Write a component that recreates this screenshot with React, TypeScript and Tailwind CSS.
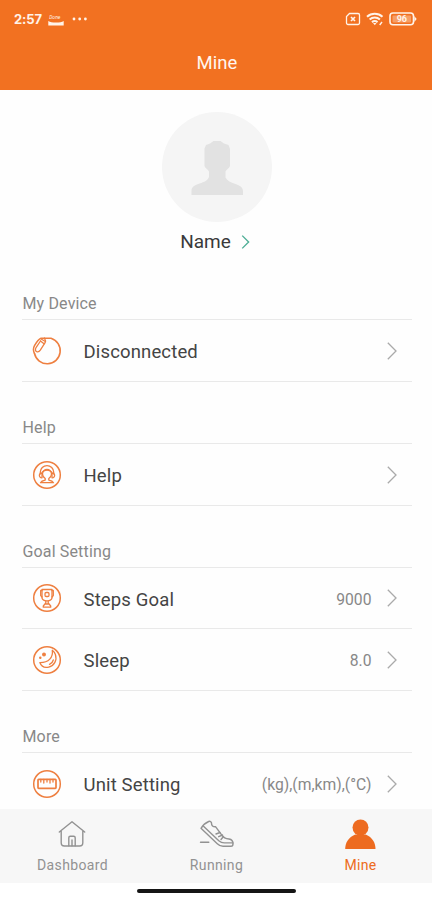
import type { ReactNode } from "react";

function StatusBar() {
  return (
    <div className="flex h-[38px] items-center justify-between pl-[14px] pr-[15px] text-[#fff3e9]">
      <div className="flex items-center">
        <span className="w-[28px] whitespace-nowrap font-['Inter'] text-[13px] font-bold leading-none tracking-[-0.1px]">
          2:57
        </span>
        <svg width="16" height="13" viewBox="0 0 16 13" className="ml-[6px] mt-[2px]" fill="currentColor">
          <text x="1.2" y="4.5" fontSize="5" fontStyle="italic">Done</text>
          <path d="M.3 7c2 1.100 4 1.500 7.700 1.500s5.700-.4 7.700-1.500v4.500H.3z" />
        </svg>
        <svg width="16" height="4" viewBox="0 0 16 4" className="ml-2" fill="currentColor">
          <circle cx="2" cy="2" r="1.4" />
          <circle cx="7.700" cy="2" r="1.400" />
          <circle cx="13.400" cy="2" r="1.400" />
        </svg>
      </div>
      <div className="flex items-center">
        <svg width="16" height="14" viewBox="0 0 16 14" fill="none" stroke="currentColor" strokeWidth="1.300">
          <path d="M4.500 1.500H13A1.500 1.500 0 0 1 14.500 3v8a1.500 1.500 0 0 1-1.500 1.500H3A1.500 1.500 0 0 1 1.500 11V4.500z" />
          <path d="m6 5 4 4m0-4L6 9" strokeWidth="1.700" />
        </svg>
        <svg width="18" height="14" viewBox="0 0 18 14" className="ml-[5px]" fill="none" stroke="currentColor" strokeWidth="2">
          <path d="M1 4.700a11.500 11.500 0 0 1 15.500 0" />
          <path d="M3.600 7.500a7.500 7.500 0 0 1 10.300 0" />
          <path d="M6 10.200a4 4 0 0 1 5.500 0" />
          <path d="m7 11 1.800 2.200 1.700-2.200z" fill="currentColor" stroke="none" />
          <path d="m16 10-2.300 3" strokeWidth="1.400" />
        </svg>
        <svg width="28" height="14" viewBox="0 0 28 14" className="ml-[5px]" fill="none" stroke="currentColor" strokeWidth="1.600">
          <rect x="1" y="1" width="23.500" height="11.800" rx="3" />
          <path d="M25.300 4 27.700 7l-2.400 3z" fill="currentColor" stroke="none" />
          <rect x="3.500" y="3.500" width="18.500" height="7" rx="1" fill="currentColor" stroke="none" opacity=".35" />
          <text x="12.800" y="10.200" textAnchor="middle" fontSize="9" fontWeight="700" fill="currentColor" stroke="none">96</text>
        </svg>
      </div>
    </div>
  );
}

function Chevron({ className }: { className: string }) {
  return (
    <svg viewBox="0 0 10 18" fill="none" stroke="currentColor" className={className}>
      <path d="m.8.800 8.200 8.200-8.200 8.200" />
    </svg>
  );
}

function RowIcon({ children, ring = true }: { children: ReactNode; ring?: boolean }) {
  return (
    <svg
      width="30"
      height="30"
      viewBox="0 0 30 30"
      className="shrink-0 text-[#ee7f40]"
      fill="none"
      stroke="currentColor"
      strokeWidth="1.3"
      strokeLinecap="round"
      strokeLinejoin="round"
    >
      {ring && <circle cx="15" cy="15" r="13.300" strokeWidth="1.500" />}
      {children}
    </svg>
  );
}

const bandIcon = (
  <RowIcon ring={false}>
    <path d="M12.500 2.300H19A13 13 0 1 1 2.500 17.500" strokeWidth="1.600" />
    <path d="M12.500 2.300H9C6.500 3.200 4.300 6.500 2.500 9.700c-1.500 2.600-1.300 5.300 0 7.800" strokeWidth="1.500" />
    <path d="M8.500 5 4.200 11.300c-1.300 2.300-.8 3.800.5 4.400 1.300.5 2.700-.2 3.600-1.500l4.800-7.500c.7-1.300.5-2.800-.6-4.400" />
    <path d="m8.500 5 3.500 2.700M9.500 3.300l3.500 2" />
  </RowIcon>
);

const helpIcon = (
  <RowIcon>
    <path d="M8.300 14V12.300a6.700 6.700 0 0 1 13.400 0V14" />
    <path d="M10 13c-3.500-.3-3.500 5 0 4.800zM20 13c3.500-.3 3.500 5 0 4.800z" />
    <path d="M10.500 14c0-2.800 2.200-4.500 4.500-4.500s4.500 1.700 4.500 4.500c0 2-1.300 3.500-2.700 4.500v1.600c2.100.4 4 1.200 4.700 2.600h-13c.7-1.400 2.600-2.200 4.700-2.600v-1.600c-1.400-1-2.700-2.500-2.700-4.500z" />
    <path d="M10.500 12c2-2.500 7-2.500 9 0" />
  </RowIcon>
);

const trophyIcon = (
  <RowIcon>
    <path d="M10 6.500h10v8c0 1.600-2 3-3.800 3.300h-2.400C12 17.500 10 16.100 10 14.500z" />
    <path d="M10 7.500H8.700v5L10 14M20 7.500h1.300v5L20 14" />
    <rect x="13" y="9.500" width="4" height="4" rx="1.200" />
    <path d="M13.800 17.800v2L11.300 23v1.200h7.400V23l-2.500-3.200v-2M13 21h4" />
  </RowIcon>
);

const moonIcon = (
  <RowIcon>
    <path d="M20.300 5.300c1 6.900-3.500 12.400-12.500 12.300 1.500 3.800 5 5.500 9 4.500 5.500-1.500 8.500-7 6.600-12.600-.5-1.500-1.500-3-3.100-4.200z" />
    <circle cx="12" cy="9.500" r="1.300" fill="currentColor" />
    <circle cx="8.300" cy="12.800" r=".6" fill="currentColor" />
    <path d="M17.500 19.300c2-.8 3.300-2.300 3.800-4.300" />
  </RowIcon>
);

const rulerIcon = (
  <RowIcon>
    <rect x="6" y="10.300" width="18" height="9" rx=".7" strokeWidth="1.700" />
    <path d="M8.800 10.500V13M11.800 10.500v3.500M15 10.500V13M18 10.500v3.500M21 10.500V13" />
  </RowIcon>
);

interface Row {
  label: string;
  icon: ReactNode;
  value?: string;
}

const sections: { title: string; rows: Row[] }[] = [
  { title: "My Device", rows: [{ label: "Disconnected", icon: bandIcon }] },
  { title: "Help", rows: [{ label: "Help", icon: helpIcon }] },
  {
    title: "Goal Setting",
    rows: [
      { label: "Steps Goal", icon: trophyIcon, value: "9000" },
      { label: "Sleep", icon: moonIcon, value: "8.0" },
    ],
  },
  { title: "More", rows: [{ label: "Unit Setting", icon: rulerIcon, value: "(kg),(m,km),(°C)" }] },
];

function SettingRow({ label, icon, value }: Row) {
  return (
    <button className="flex h-[61.800px] w-full items-center border-b border-[#e9e9e9] pt-px pl-[10px] pr-[15.500px] text-left">
      {icon}
      <span className="ml-[21.500px] pt-[4px] text-[18.500px] tracking-[0.150px] text-[#444]">{label}</span>
      <span className="ml-auto pt-[2px] text-[15.700px] text-[#888]">{value}</span>
      <Chevron className="ml-[15px] h-[18px] w-[10px] stroke-[1.300] text-[#aaa]" />
    </button>
  );
}

function BottomNav() {
  return (
    <nav className="grid h-[74px] shrink-0 grid-cols-3 bg-[#f7f7f7] text-[14px] text-[#929292]">
      <button className="flex flex-col items-center pt-[10px]">
        <svg width="30" height="30" viewBox="0 0 30 30" fill="none" stroke="currentColor" strokeWidth="1.400" strokeLinejoin="round" strokeLinecap="round">
          <path d="M2.300 13 15 2.700 27.700 13M4.200 11.800v12c0 2.200 1 3.200 3.200 3.200h15.200c2.200 0 3.200-1 3.200-3.200v-12" />
          <path d="M11.800 26.800v-8c0-1 .5-1.500 1.500-1.500h3.400c1 0 1.500.5 1.500 1.500v8M15 21v5.800" />
        </svg>
        <span className="mt-[6px] pl-px leading-5 tracking-[0.350px]">Dashboard</span>
      </button>
      <button className="flex flex-col items-center pt-[10px]">
        <svg width="35" height="30" viewBox="0 0 35 30" fill="none" stroke="currentColor" strokeWidth="1.400" strokeLinejoin="round" strokeLinecap="round">
          <path d="M2 9.300c2-3.300 4.500-5.500 7.700-6.800 1.500-.5 2.500.1 2.800 1.500-.2 2.500 1.500 4 4.200 3.800l6.300 8.500c1.500 2.400 4 3.300 7 3.700 2.500.4 4 2.200 4 4.700 0 1.600-.6 2.600-2 2.600h-8c-2.300 0-4-.8-5.700-2.500z" />
          <path d="m4.500 7.200 15.300 14.500c1.800 1.600 3.300 2.200 5.500 2.200H34M17 15l4-1.500M19.700 17.700l3.800-1.700M24.500 17.500l-2.500 3M1.500 23.300h8.300" />
        </svg>
        <span className="mt-[6px] pl-px leading-5 tracking-[0.350px]">Running</span>
      </button>
      <button className="flex flex-col items-center pt-[10px] text-[#ed6b20]">
        <svg width="32" height="30" viewBox="0 0 32 30" fill="currentColor">
          <circle cx="16.500" cy="8.500" r="8" />
          <path d="M1.200 30c0-6.500 3.300-11.500 10-14.500h10.600c6.500 3 9.700 8 9.700 14.500z" />
        </svg>
        <span className="mt-[6px] pl-px leading-5 tracking-[0.350px]">Mine</span>
      </button>
    </nav>
  );
}

export default function App() {
  return (
    <div className="flex h-[900px] w-[432px] flex-col overflow-hidden bg-[#fefefe] font-['Roboto',sans-serif]">
      <header className="h-[90px] shrink-0 bg-[#f27121]">
        <StatusBar />
        <h1 className="pt-[11px] pl-[2px] text-center text-[18.500px] leading-7 tracking-[0.100px] text-[#fff6ef]">Mine</h1>
      </header>

      <main className="flex min-h-0 flex-1 flex-col overflow-hidden">
        <div className="flex shrink-0 flex-col items-center pt-[22px] pl-px">
          <div className="flex h-[110px] w-[110px] items-center justify-center rounded-full bg-[#f5f5f5]">
            <svg width="52" height="56" viewBox="0 0 52 56" fill="#e2e2e2">
              <path d="M19 4.500 22.500 2h7L33 4.500l4.500 1.500 1.500 4v17c-.5 2-3.500 3.500-4.500 5.500v6c2 3.500 5 5 10 6.500 5.500 1.800 7.500 4 7.500 7V56H.5v-4.500c0-3 2.500-5.200 8-7 5-1.500 8-3 9.500-6.500v-5.500c-1-2-4-3.500-4.500-5.500V9.500L15 6z" />
            </svg>
          </div>
          <button className="mt-[6px] mr-[3px] flex h-7 items-center gap-[10px] text-[19px] text-[#3a3a3a]">
            Name
            <Chevron className="h-[14px] w-[9px] stroke-[1.800] text-[#4fae96]" />
          </button>
        </div>

        <div className="shrink-0 pt-[32.200px] pl-[22px] pr-5">
          {sections.map((section) => (
            <section key={section.title} className="mb-[29.900px]">
              <h2 className="h-[32px] border-b border-[#e9e9e9] pt-[4px] pl-[0.500px] text-[16px] leading-6 tracking-[0.150px] text-[#888]">
                {section.title}
              </h2>
              {section.rows.map((row) => (
                <SettingRow key={row.label} {...row} />
              ))}
            </section>
          ))}
        </div>
      </main>

      <BottomNav />
      <div className="flex h-[17px] shrink-0 justify-center bg-white pt-[6px]">
        <div className="h-1 w-[159px] rounded-full bg-[#151515]" />
      </div>
    </div>
  );
}
